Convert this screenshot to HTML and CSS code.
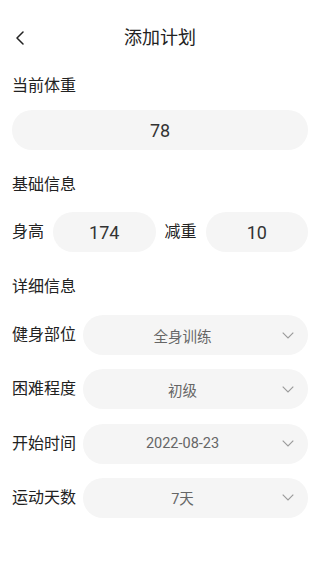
FILE: index.html
```html
<!DOCTYPE html>
<html lang="zh">
<head>
<meta charset="utf-8">
<meta name="viewport" content="width=device-width, initial-scale=1">
<title>添加计划</title>
<link rel="stylesheet" href="styles.css">
</head>
<body>
<div class="page">
  <header class="header">
    <span class="back">
      <svg width="10" height="14" viewBox="0 0 10 14"><path d="M8 1 L2 7 L8 13" fill="none" stroke="#222" stroke-width="1.5" stroke-linecap="round" stroke-linejoin="round"/></svg>
    </span>
    <h1 class="title">添加计划</h1>
  </header>

  <div class="section-title first">当前体重</div>
  <div class="field field-wide">78</div>

  <div class="section-title">基础信息</div>
  <div class="pair-row">
    <span class="label short">身高</span>
    <div class="field field-half">174</div>
    <span class="label short">减重</span>
    <div class="field field-half">10</div>
  </div>

  <div class="section-title">详细信息</div>
  <div class="select-list">
    <div class="select-row">
      <span class="label">健身部位</span>
      <div class="select"><span class="select-value">全身训练</span><svg class="chev" width="12" height="7" viewBox="0 0 12 7"><path d="M0.7 0.7 L6 6 L11.3 0.7" fill="none" stroke="#9a9a9a" stroke-width="1.1"/></svg></div>
    </div>
    <div class="select-row">
      <span class="label">困难程度</span>
      <div class="select"><span class="select-value">初级</span><svg class="chev" width="12" height="7" viewBox="0 0 12 7"><path d="M0.7 0.7 L6 6 L11.3 0.7" fill="none" stroke="#9a9a9a" stroke-width="1.1"/></svg></div>
    </div>
    <div class="select-row">
      <span class="label">开始时间</span>
      <div class="select"><span class="select-value">2022-08-23</span><svg class="chev" width="12" height="7" viewBox="0 0 12 7"><path d="M0.7 0.7 L6 6 L11.3 0.7" fill="none" stroke="#9a9a9a" stroke-width="1.1"/></svg></div>
    </div>
    <div class="select-row">
      <span class="label">运动天数</span>
      <div class="select"><span class="select-value">7天</span><svg class="chev" width="12" height="7" viewBox="0 0 12 7"><path d="M0.7 0.7 L6 6 L11.3 0.7" fill="none" stroke="#9a9a9a" stroke-width="1.1"/></svg></div>
    </div>
  </div>
</div>
</body>
</html>
```

FILE: styles.css
```css
* { box-sizing: border-box; }
html, body { margin: 0; padding: 0; background: #fff; }
body {
  font-family: Roboto, "Noto Sans CJK SC", sans-serif;
  color: #222;
}
.page { padding: 0 12px; }

.header {
  position: relative;
  height: 50px;
  padding-top: 26px;
  display: flex;
  justify-content: center;
}
.back {
  position: absolute;
  left: 3px;
  top: 31px;
  display: flex;
}
.title {
  margin: 0;
  font-size: 18px;
  font-weight: 400;
  line-height: 24px;
  color: #222;
}

.section-title {
  font-size: 16px;
  line-height: 24px;
  margin-top: 23px;
  color: #222;
}
.section-title.first { margin-top: 24px; }

.field {
  height: 40px;
  border-radius: 20px;
  background: #f5f5f5;
  display: flex;
  align-items: center;
  justify-content: center;
  font-size: 18px;
  color: #333;
}
.field-wide { margin-top: 12px; }

.pair-row {
  margin-top: 15px;
  display: flex;
  align-items: center;
  gap: 9px;
}
.field-half { flex: 1; }

.label {
  font-size: 16px;
  line-height: 24px;
  color: #222;
  white-space: nowrap;
}
.label.short { width: 32px; }

.select-list {
  margin-top: 16px;
  display: flex;
  flex-direction: column;
  gap: 14.3px;
}
.select-row {
  display: flex;
  align-items: center;
  gap: 7px;
}
.select {
  flex: 1;
  height: 40px;
  border-radius: 20px;
  background: #f5f5f5;
  display: flex;
  align-items: center;
  padding-right: 14px;
}
.select-value {
  flex: 1;
  text-align: center;
  font-size: 14.5px;
  color: #666;
}
.chev { display: block; }
```
